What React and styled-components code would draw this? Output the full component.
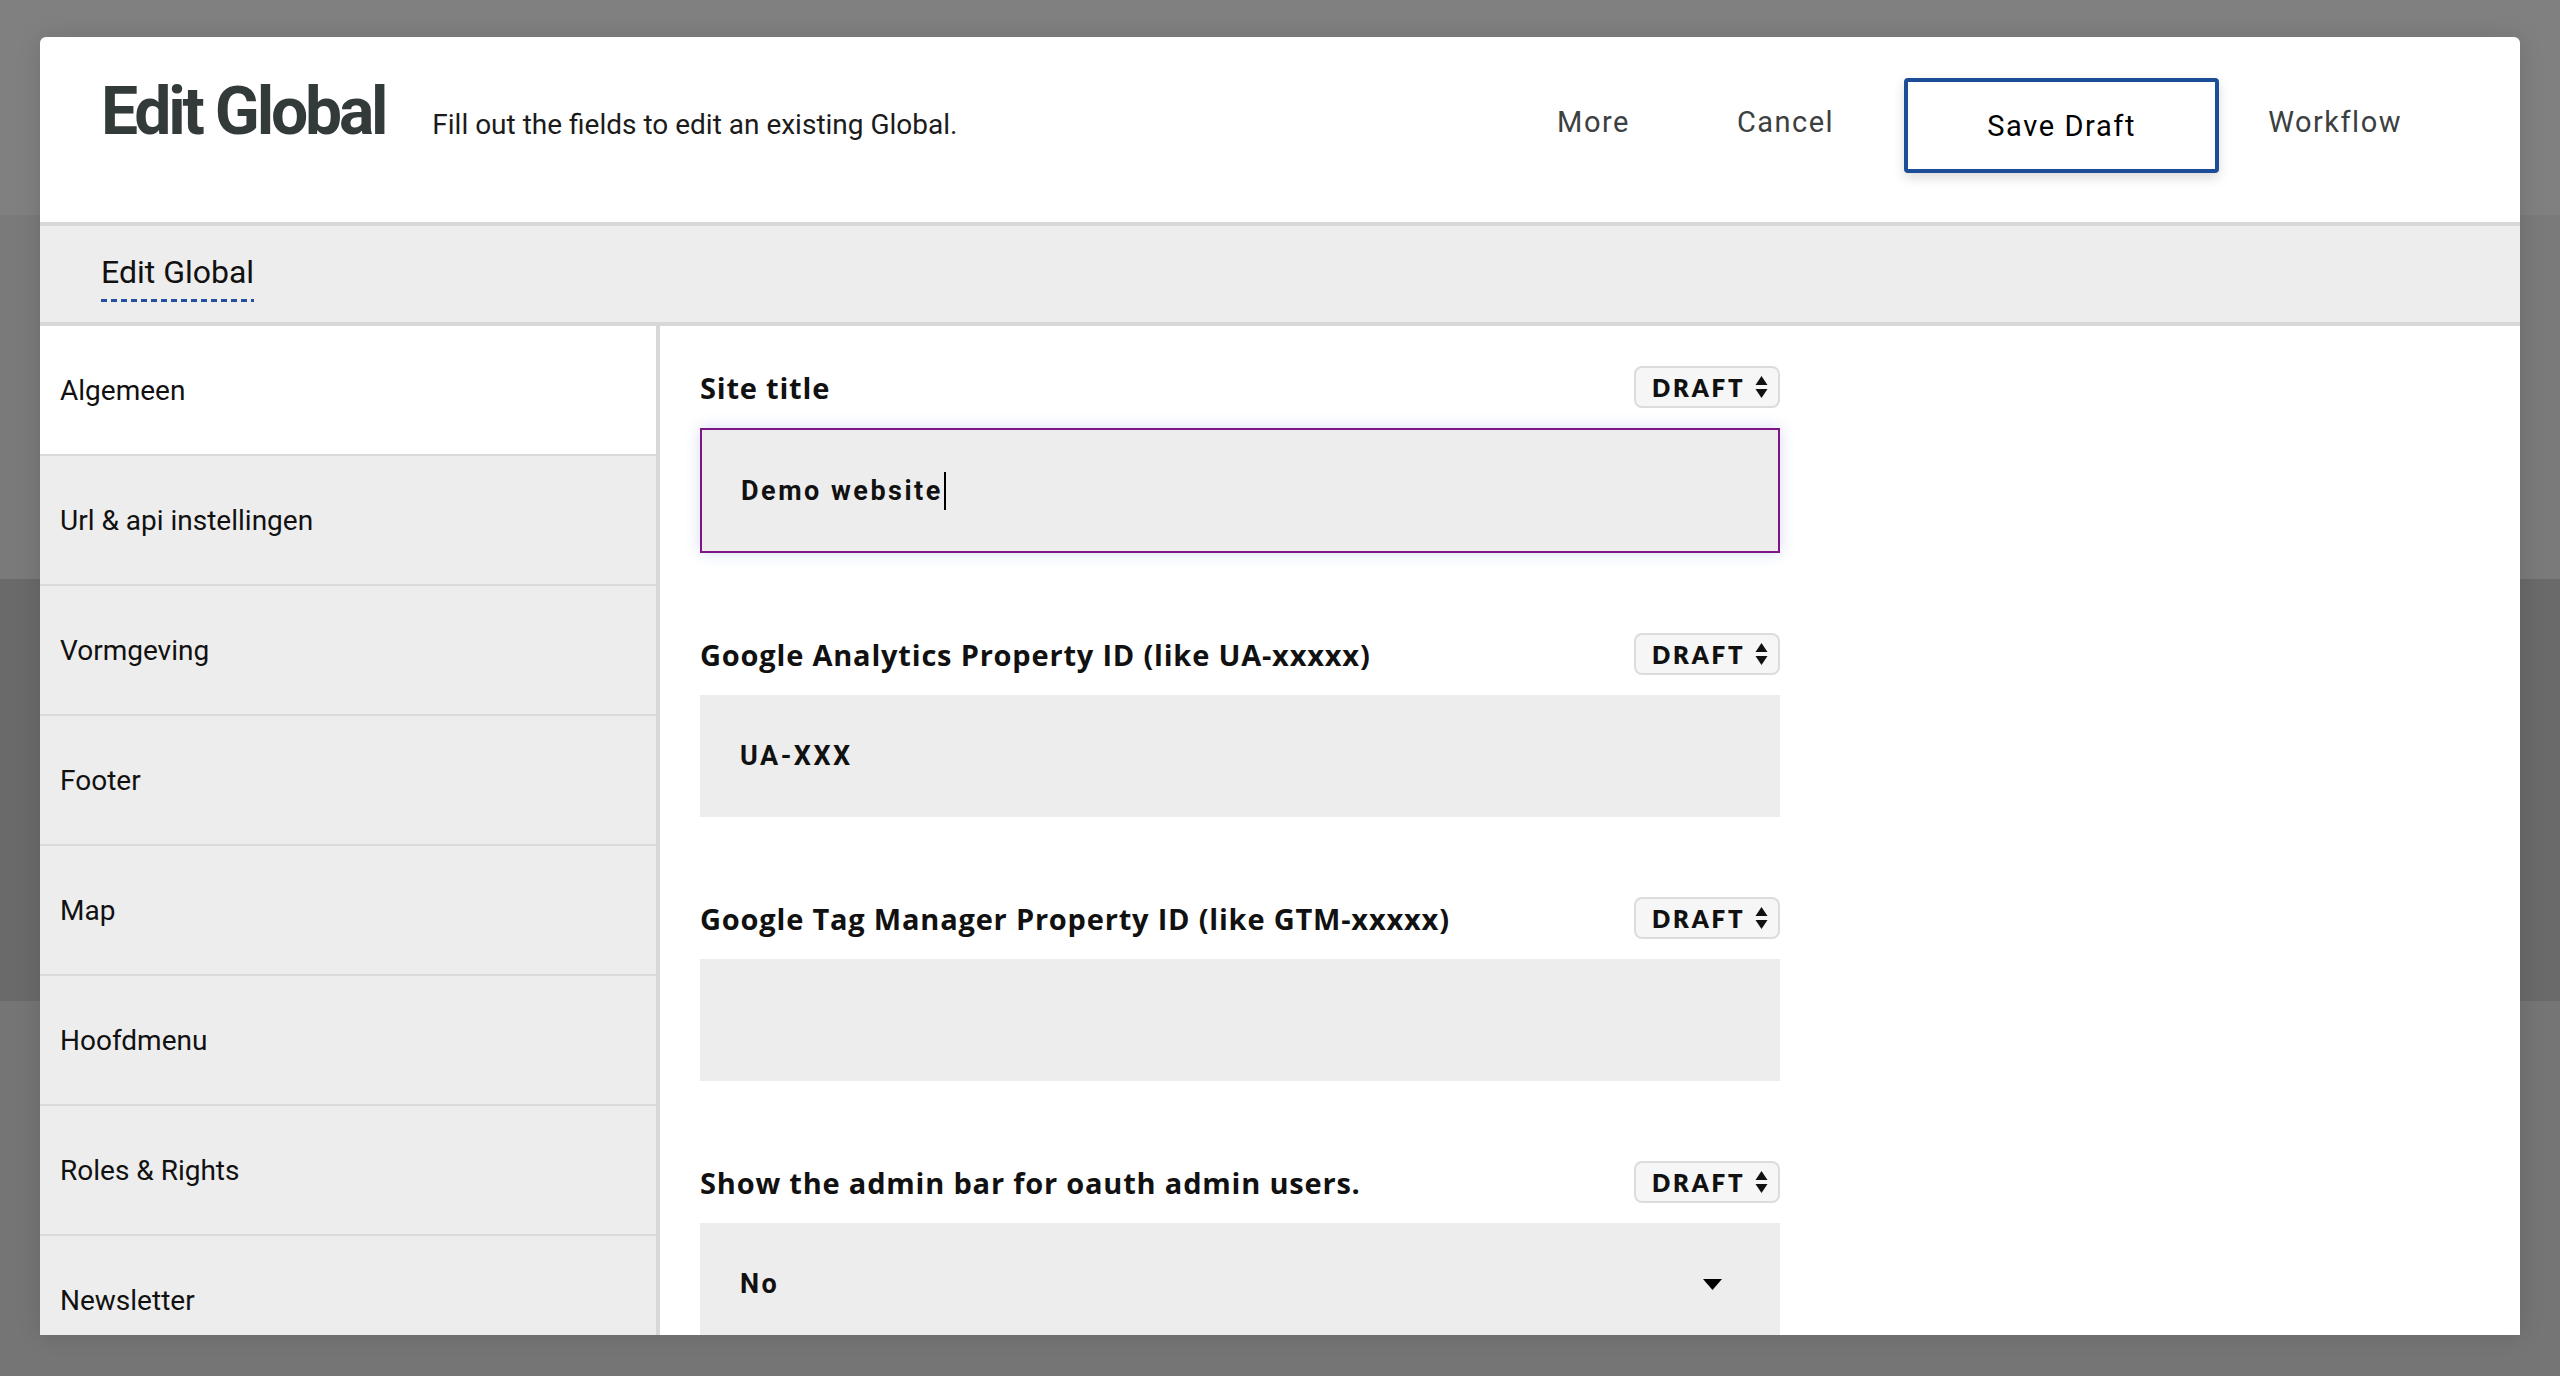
import React from "react";
import styled, { createGlobalStyle } from "styled-components";

const GlobalStyle = createGlobalStyle`
  html, body {
    margin: 0;
    padding: 0;
    height: 1376px;
    overflow: hidden;
  }
  body {
    font-family: Roboto, "Liberation Sans", sans-serif;
    background: linear-gradient(
      to bottom,
      #808080 0 215px,
      #7a7a7a 215px 579px,
      #6a6a6a 579px 1001px,
      #757575 1001px
    );
  }
`;

const Page = styled.div`
  box-sizing: border-box;
  height: 1376px;
  padding: 37px 40px 0 40px;
`;

const Modal = styled.div`
  height: 1298px;
  background: #fff;
  border-radius: 6px 6px 0 0;
  box-shadow: 0 0 24px rgba(0, 0, 0, 0.12);
  display: flex;
  flex-direction: column;
  overflow: hidden;
`;

const Header = styled.header`
  box-sizing: border-box;
  height: 185px;
  flex-shrink: 0;
  display: flex;
  align-items: flex-start;
  padding-left: 61px;
`;

const TitleGroup = styled.div`
  display: flex;
  align-items: baseline;
  gap: 47px;
  margin-top: 42px;
`;

const Title = styled.h1`
  margin: 0;
  font-size: 66px;
  line-height: 66px;
  font-weight: 700;
  letter-spacing: -3.2px;
  color: #333a3a;
`;

const Subtitle = styled.p`
  margin: 0;
  font-size: 28px;
  color: #1b1b1b;
`;

const Actions = styled.div`
  margin-left: auto;
  margin-top: 34px;
  display: flex;
  align-items: center;
  padding-right: 83px;
`;

const TextButton = styled.button`
  border: 0;
  background: none;
  font-family: inherit;
  font-size: 29px;
  letter-spacing: 1.5px;
  color: #3b4040;
  padding: 0 35px;
  margin-left: ${(p) => p.$ml || 0}px;
  line-height: 36px;
  cursor: pointer;
`;

const SaveButton = styled.button`
  box-sizing: border-box;
  width: 315px;
  height: 95px;
  margin: 7px 14px 0 35px;
  border: 4px solid #1e4d97;
  border-radius: 4px;
  background: #fff;
  box-shadow: 0 5px 12px rgba(0, 0, 0, 0.14);
  font-family: inherit;
  font-size: 29px;
  font-weight: 400;
  letter-spacing: 1.6px;
  color: #000;
  cursor: pointer;
`;

const TabBar = styled.nav`
  box-sizing: border-box;
  height: 104px;
  flex-shrink: 0;
  background: #ededed;
  border-top: 4px solid #d8d8d8;
  border-bottom: 4px solid #d8d8d8;
  padding: 28px 0 0 61px;
`;

const Tab = styled.span`
  display: inline-block;
  font-size: 32px;
  line-height: 36px;
  color: #111;

  &::after {
    content: "";
    display: block;
    margin-top: 9px;
    height: 3px;
    background: repeating-linear-gradient(
      to right,
      #2350a0 0 6px,
      transparent 6px 10px
    );
  }
`;

const Body = styled.div`
  flex: 1;
  min-height: 0;
  display: flex;
`;

const Sidebar = styled.aside`
  box-sizing: border-box;
  width: 620px;
  flex-shrink: 0;
  border-right: 4px solid #d8d8d8;
  display: flex;
  flex-direction: column;
`;

const NavItem = styled.div`
  flex-shrink: 0;
  height: 128px;
  display: flex;
  align-items: center;
  padding-left: 20px;
  border-bottom: 2px solid #dadada;
  background: ${(p) => (p.$active ? "#fff" : "#ededed")};
  font-size: 28px;
  color: #111;
`;

const Content = styled.main`
  flex: 1;
  padding: 40px 0 0 40px;
`;

const Form = styled.div`
  width: 1080px;
`;

const Field = styled.div`
  margin-bottom: 80px;
`;

const LabelRow = styled.div`
  height: 42px;
  display: flex;
  align-items: center;
  justify-content: space-between;
  margin-bottom: 20px;
`;

const Label = styled.label`
  font-family: "Open Sans", Lato, sans-serif;
  font-weight: 700;
  font-size: 29px;
  letter-spacing: 0.8px;
  color: #111;
`;

const Badge = styled.div`
  box-sizing: border-box;
  width: 146px;
  height: 42px;
  border: 2px solid #dcdcdc;
  border-radius: 8px;
  background: #f6f6f6;
  display: flex;
  align-items: center;
  padding-left: 16px;
  gap: 10px;
  font-family: Lato, "Open Sans", sans-serif;
  font-weight: 800;
  font-size: 24px;
  letter-spacing: 2.8px;
  color: #111;
`;

const Input = styled.div`
  box-sizing: border-box;
  height: ${(p) => (p.$focused ? 125 : 122)}px;
  background: #ededed;
  border: ${(p) => (p.$focused ? "2px solid #7d1585" : "0")};
  box-shadow: ${(p) =>
    p.$focused ? "0 0 14px rgba(60, 100, 200, 0.22)" : "none"};
  display: flex;
  align-items: center;
  padding: 0 58px 0 ${(p) => (p.$focused ? 39 : 40)}px;
  font-size: 27px;
  font-weight: 700;
  letter-spacing: 2.5px;
  color: #111;
`;

const Cursor = styled.span`
  display: inline-block;
  width: 2px;
  height: 38px;
  margin-left: 1px;
  background: #000;
`;

const SelectValue = styled.span`
  flex: 1;
`;

function SortIcon() {
  return (
    <svg width="13" height="24" viewBox="0 0 13 24">
      <path d="M6.5 1 L12.5 10 H0.5 Z" fill="#111" />
      <path d="M6.5 23 L12.5 14 H0.5 Z" fill="#111" />
    </svg>
  );
}

function DropIcon() {
  return (
    <svg width="19" height="11" viewBox="0 0 19 11">
      <path d="M0 0 H19 L9.5 11 Z" fill="#000" />
    </svg>
  );
}

const navItems = [
  "Algemeen",
  "Url & api instellingen",
  "Vormgeving",
  "Footer",
  "Map",
  "Hoofdmenu",
  "Roles & Rights",
  "Newsletter",
];

function FieldBlock({ label, children }) {
  return (
    <Field>
      <LabelRow>
        <Label>{label}</Label>
        <Badge>
          DRAFT
          <SortIcon />
        </Badge>
      </LabelRow>
      {children}
    </Field>
  );
}

export default function App() {
  return (
    <>
      <GlobalStyle />
      <Page>
        <Modal>
          <Header>
            <TitleGroup>
              <Title>Edit Global</Title>
              <Subtitle>Fill out the fields to edit an existing Global.</Subtitle>
            </TitleGroup>
            <Actions>
              <TextButton>More</TextButton>
              <TextButton $ml={37}>Cancel</TextButton>
              <SaveButton>Save Draft</SaveButton>
              <TextButton>Workflow</TextButton>
            </Actions>
          </Header>
          <TabBar>
            <Tab>Edit Global</Tab>
          </TabBar>
          <Body>
            <Sidebar>
              {navItems.map((item, i) => (
                <NavItem key={item} $active={i === 0}>
                  {item}
                </NavItem>
              ))}
            </Sidebar>
            <Content>
              <Form>
                <FieldBlock label="Site title">
                  <Input $focused>
                    Demo website
                    <Cursor />
                  </Input>
                </FieldBlock>
                <FieldBlock label="Google Analytics Property ID (like UA-xxxxx)">
                  <Input>UA-XXX</Input>
                </FieldBlock>
                <FieldBlock label="Google Tag Manager Property ID (like GTM-xxxxx)">
                  <Input />
                </FieldBlock>
                <FieldBlock label="Show the admin bar for oauth admin users.">
                  <Input>
                    <SelectValue>No</SelectValue>
                    <DropIcon />
                  </Input>
                </FieldBlock>
              </Form>
            </Content>
          </Body>
        </Modal>
      </Page>
    </>
  );
}
